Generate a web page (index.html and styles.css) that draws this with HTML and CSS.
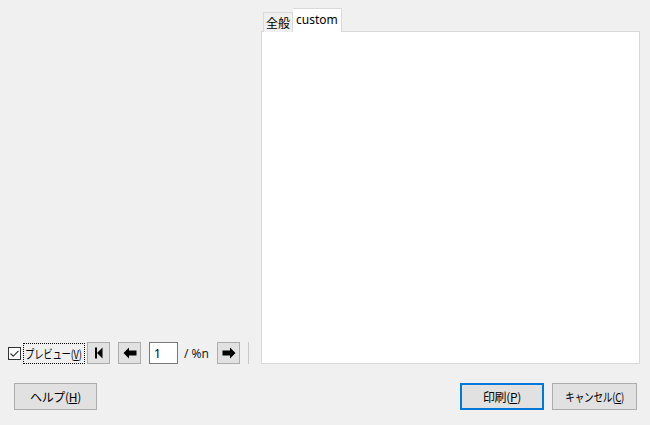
FILE: index.html
```html
<!DOCTYPE html>
<html>
<head>
<meta charset="utf-8">
<link rel="stylesheet" href="styles.css">
</head>
<body>
<div class="dialog">
  <div class="main">
    <div class="left">
      <div class="toolbar">
        <label class="check">
          <span class="box"><svg width="11" height="11" viewBox="0 0 11 11"><path d="M1.5 5.5 L4.2 8.2 L9.5 2.8" fill="none" stroke="#333" stroke-width="1.1"/></svg></span>
          <span class="label"><span class="narrow">プレビュー(<u>V</u>)</span></span>
        </label>
        <button class="tb first"><svg width="12" height="12" viewBox="0 0 12 12"><rect x="2" y="0.5" width="2" height="11" fill="#000"/><path d="M9.5 0.5 L4 6 L9.5 11.5 Z" fill="#000"/></svg></button>
        <button class="tb prev"><svg width="14" height="12" viewBox="0 0 14 12"><path d="M0.5 6 L6 0.5 L6 3.5 L13.5 3.5 L13.5 8.5 L6 8.5 L6 11.5 Z" fill="#000"/></svg></button>
        <input class="page" type="text" value="1">
        <span class="count">/ %n</span>
        <button class="tb next"><svg width="14" height="12" viewBox="0 0 14 12"><path d="M13.5 6 L8 0.5 L8 3.5 L0.5 3.5 L0.5 8.5 L8 8.5 L8 11.5 Z" fill="#000"/></svg></button>
        <span class="sep"></span>
      </div>
    </div>
    <div class="right">
      <div class="tabs">
        <div class="tab">全般</div>
        <div class="tab active">custom</div>
      </div>
      <div class="panel"></div>
    </div>
  </div>
  <div class="buttons">
    <button class="btn">ヘルプ(<u>H</u>)</button>
    <div class="spacer"></div>
    <button class="btn default">印刷(<u>P</u>)</button>
    <button class="btn"><span class="narrow-c">キャンセル(<u>C</u>)</span></button>
  </div>
</div>
</body>
</html>
```
FILE: styles.css
```css
* { box-sizing: border-box; }
html, body {
  margin: 0;
  padding: 0;
  background: #f0f0f0;
}
body {
  font-family: "Noto Sans CJK JP", "Noto Sans", sans-serif;
  font-size: 12px;
  color: #000;
}
.dialog {
  width: 650px;
  height: 425px;
  display: flex;
  flex-direction: column;
}
.main {
  display: flex;
  padding: 8px 10px 0 8px;
  height: 364px;
}
.left {
  width: 253px;
  flex-shrink: 0;
  display: flex;
  flex-direction: column;
  justify-content: flex-end;
}
.toolbar {
  display: flex;
  align-items: center;
  height: 22px;
}
.toolbar > * { flex-shrink: 0; }
.check {
  display: flex;
  align-items: center;
  height: 21px;
}
.box {
  width: 13px;
  height: 13px;
  border: 1px solid #333;
  background: #fff;
  display: flex;
  align-items: center;
  justify-content: center;
}
.label {
  margin-left: 2px;
  border: 1px dotted #000;
  height: 21px;
  width: 62px;
  line-height: 19px;
  padding: 0 1px;
  font-size: 12px;
  white-space: nowrap;
  overflow: hidden;
}
.narrow {
  display: inline-block;
  transform: scaleX(0.78);
  transform-origin: left center;
  letter-spacing: -0.3px;
}
.narrow-c {
  display: inline-block;
  transform: scaleX(0.8);
  transform-origin: center;
  white-space: nowrap;
}
.tb {
  width: 23px;
  height: 22px;
  padding: 0;
  border: 1px solid #adadad;
  background: #e1e1e1;
  display: flex;
  align-items: center;
  justify-content: center;
}
.first { margin-left: 2px; }
.prev { margin-left: 8px; }
.page {
  margin-left: 8px;
  width: 29px;
  height: 22px;
  border: 1px solid #7a7a7a;
  background: #fff;
  font-family: "Noto Sans", sans-serif;
  font-size: 12px;
  padding: 0 4px;
}
.count {
  margin-left: 6px;
  font-family: "Noto Sans", sans-serif;
  font-size: 12px;
  color: #222;
  width: 27px;
  white-space: nowrap;
}
.next { margin-left: 6px; }
.sep {
  margin-left: 8px;
  width: 1px;
  height: 22px;
  background: #c8c8c8;
}
.right {
  flex: 1;
  display: flex;
  flex-direction: column;
}
.tabs {
  display: flex;
  align-items: flex-end;
  height: 24px;
  padding-left: 2px;
  position: relative;
  z-index: 1;
  margin-bottom: -1px;
}
.tab {
  height: 20px;
  padding: 0 2px;
  border: 1px solid #d9d9d9;
  border-bottom: none;
  background: #f0f0f0;
  line-height: 19px;
  font-size: 12px;
}
.tab.active {
  height: 24px;
  background: #fff;
  border-left: none;
  font-family: "Noto Sans", sans-serif;
  padding: 0 3px;
  line-height: 22px;
}
.panel {
  flex: 1;
  background: #fff;
  border: 1px solid #d9d9d9;
}
.buttons {
  display: flex;
  padding: 19px 13px 0 14px;
}
.spacer { flex: 1; }
.btn {
  width: 83px;
  height: 27px;
  border: 1px solid #adadad;
  background: #e1e1e1;
  font-family: "Noto Sans CJK JP", sans-serif;
  font-size: 12px;
  letter-spacing: -0.3px;
  padding: 0;
  margin-left: 8px;
  color: #000;
}
.btn:first-child { margin-left: 0; }
.btn.default {
  border: 2px solid #0078d7;
  width: 84px;
}
.btn:last-child { width: 85px; }
```
